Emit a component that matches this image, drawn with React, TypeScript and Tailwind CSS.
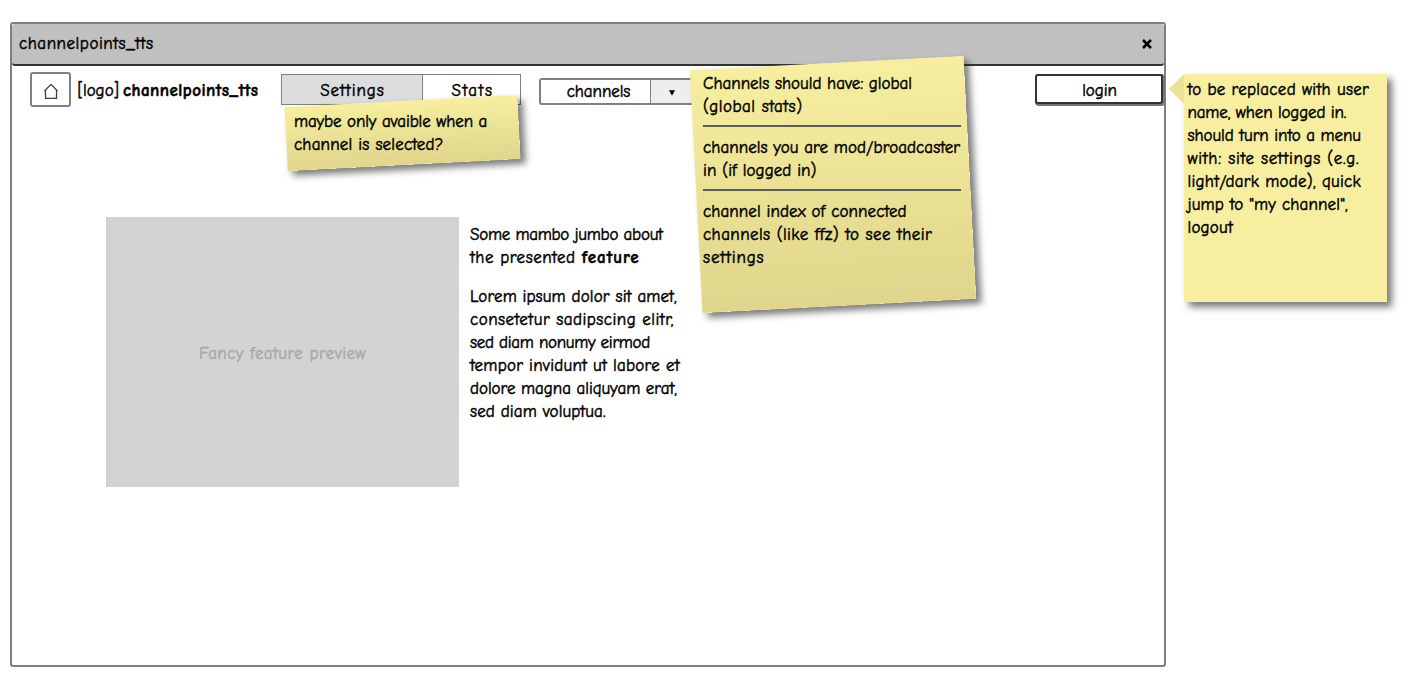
import type { ReactNode } from "react";

function Line({ tracking, children }: { tracking: string; children: ReactNode }) {
  return <span className={`block whitespace-nowrap ${tracking}`}>{children}</span>;
}

function Rule() {
  return <hr className="my-[7px] h-[2px] border-0 bg-[#5b5b60]" />;
}

function TitleBar() {
  return (
    <header className="flex h-[42px] items-center justify-between rounded-[3px] border-b-2 border-[#333] bg-[#c0c0c0] pr-3 pl-[7px]">
      <span className="pb-[2px] tracking-[0.53px]">channelpoints_tts</span>
      <svg viewBox="0 0 10 10" className="h-[10px] w-[10px]" stroke="black" strokeWidth="2.6" fill="none">
        <path d="M1 1L9 9M9 1L1 9" />
      </svg>
    </header>
  );
}

function NavBar() {
  return (
    <nav className="flex h-[50px] items-start pl-[18px] pt-[6px]">
      <button className="flex h-[35px] w-[41px] shrink-0 items-center justify-center rounded-[3px] border-2 border-[#808080] bg-white">
        <svg viewBox="0 0 14 16" className="mt-[3px] h-[16px] w-[14px]" stroke="#3d3d42" strokeWidth="1.3" fill="none">
          <path d="M0.4 8L7 1.4L13.6 8M1.5 7V15.3H12.5V7" />
        </svg>
      </button>
      <div className="flex h-[35px] w-[210px] shrink-0 items-center pt-px pl-[6.5px]">
        <span className="mr-[4px] tracking-[0px]">[logo]</span>
        <b className="tracking-[0.48px]">channelpoints_tts</b>
      </div>
      <div className="mt-[2px] flex h-[31px] w-[240px] shrink-0 border border-[#808080]">
        <button className="w-[141px] shrink-0 border-r border-[#808080] bg-[#ddd] pt-px pl-px tracking-[0.94px]">Settings</button>
        <button className="flex-1 bg-white pt-px pl-[2px] tracking-[1.5px]">Stats</button>
      </div>
      <button className="mt-[6px] ml-[18px] flex h-[27px] w-[158px] shrink-0 rounded-[3px] border-2 border-[#808080]">
        <span className="h-full w-[110px] shrink-0 border-r border-[#808080] bg-white pl-[6px] tracking-[-0.08px]">channels</span>
        <span className="flex h-full flex-1 items-center bg-[#eee] pl-[18px]">
          <svg viewBox="0 0 6 6" className="mt-[2px] h-[6px] w-[6px]">
            <path d="M0 0.3H6L3 5.8Z" fill="black" />
          </svg>
        </span>
      </button>
      <button className="mt-[2px] mr-px ml-auto h-[30px] w-[128px] rounded-[3px] border-2 border-[#333] bg-white pt-[3px] pl-px tracking-[-0.1px] shadow-[1px_1px_0_1px_#777]">
        login
      </button>
    </nav>
  );
}

function Feature() {
  return (
    <section className="flex pt-[101px] pl-[94px]">
      <div className="flex h-[270px] w-[353px] items-center justify-center bg-[#d3d3d3] pt-[3px] text-[#a9a9a9] [-webkit-text-stroke-color:#a9a9a9]">
        <span className="tracking-[0.44px]">Fancy feature preview</span>
      </div>
      <div className="pt-[6px] pl-[11px]">
        <p>
          <Line tracking="tracking-[-0.25px]">Some mambo jumbo about</Line>
          <Line tracking="tracking-[0.5px]">
            the presented <b className="tracking-[0.98px]">feature</b>
          </Line>
        </p>
        <p className="mt-4">
          <Line tracking="tracking-[0.12px]">Lorem ipsum dolor sit amet,</Line>
          <Line tracking="tracking-[0.48px]">consetetur sadipscing elitr,</Line>
          <Line tracking="tracking-[-0.3px]">sed diam nonumy eirmod</Line>
          <Line tracking="tracking-[0.24px]">tempor invidunt ut labore et</Line>
          <Line tracking="tracking-[-0.04px]">dolore magna aliquyam erat,</Line>
          <Line tracking="tracking-[0.12px]">sed diam voluptua.</Line>
        </p>
      </div>
    </section>
  );
}

function TabsNote() {
  return (
    <aside className="absolute top-[101px] left-[286px] h-[64px] w-[233px]">
      <div className="absolute inset-0 -rotate-3 bg-linear-to-b from-[#f7ef9f] to-[#dfd58c] shadow-[5px_5px_7px_rgba(33,33,33,0.6)]" />
      <div className="relative pt-[9px] pl-[8px]">
        <Line tracking="tracking-[-0.11px]">maybe only avaible when a</Line>
        <Line tracking="tracking-[0.18px]">channel is selected?</Line>
      </div>
    </aside>
  );
}

function ChannelsNote() {
  return (
    <aside className="absolute top-[63px] left-[696px] h-[243px] w-[274px]">
      <div className="absolute inset-0 -rotate-3 bg-linear-to-b from-[#f7ef9f] to-[#dfd58c] shadow-[5px_5px_7px_rgba(33,33,33,0.6)]" />
      <div className="relative w-[265px] pt-[9px] pl-[7px]">
        <Line tracking="tracking-[-0.02px]">Channels should have: global</Line>
        <Line tracking="tracking-[0.47px]">(global stats)</Line>
        <Rule />
        <div className="pt-[2px]">
          <Line tracking="tracking-[0.05px]">channels you are mod/broadcaster</Line>
          <Line tracking="tracking-[0.08px]">in (if logged in)</Line>
        </div>
        <Rule />
        <div className="pt-[2px]">
          <Line tracking="tracking-[0.09px]">channel index of connected</Line>
          <Line tracking="tracking-[0.42px]">channels (like ffz) to see their</Line>
          <Line tracking="tracking-[0.86px]">settings</Line>
        </div>
      </div>
    </aside>
  );
}

function LoginNote() {
  return (
    <aside className="relative mt-[74px] ml-[18px] h-[228px] w-[203px] shrink-0 bg-[#f7ef9f] pt-[4px] pl-[3.5px] shadow-[5px_5px_7px_rgba(33,33,33,0.6)]">
      <svg viewBox="0 0 15 30" className="absolute top-0 -left-[15px] h-[30px] w-[15px]">
        <path d="M15 0V30L0 15Z" fill="#ebe295" />
      </svg>
      <Line tracking="tracking-[0.28px]">to be replaced with user</Line>
      <Line tracking="tracking-[-0.15px]">name, when logged in.</Line>
      <Line tracking="tracking-[-0.07px]">should turn into a menu</Line>
      <Line tracking="tracking-[0.66px]">with: site settings (e.g.</Line>
      <Line tracking="tracking-[0.26px]">light/dark mode), quick</Line>
      <Line tracking="tracking-[0.16px]">jump to "my channel",</Line>
      <Line tracking="tracking-[0.2px]">logout</Line>
    </aside>
  );
}

export default function App() {
  return (
    <div className="relative flex h-[696px] w-[1420px] items-start overflow-hidden bg-white font-['Comic_Neue','Open_Sans',sans-serif] text-[17px] leading-[23px] text-black [font-variant-ligatures:none] [-webkit-text-stroke:0.5px_currentColor]">
      <main className="mt-[22px] ml-[10px] h-[645px] w-[1156px] shrink-0 rounded-[3px] border-2 border-[#808080] bg-white">
        <TitleBar />
        <NavBar />
        <Feature />
      </main>
      <LoginNote />
      <TabsNote />
      <ChannelsNote />
    </div>
  );
}
